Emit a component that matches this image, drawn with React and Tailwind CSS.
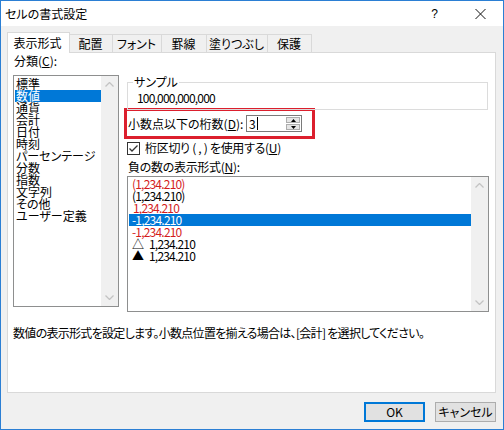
import React from "react";

const JP = "font-['Noto_Sans_CJK_JP',sans-serif]";
const NUM = "font-['Liberation_Sans_Narrow','Noto_Sans_CJK_JP',sans-serif] tracking-[-0.8px]";

function Chevron({ down }) {
  return (
    <svg width="9" height="5" viewBox="0 0 9 5">
      <path
        d={down ? "M0.5 0.5 L4.5 4.5 L8.5 0.5" : "M0.5 4.5 L4.5 0.5 L8.5 4.5"}
        fill="none"
        stroke="#c3c3c3"
        strokeWidth="1.3"
      />
    </svg>
  );
}

function ScrollBar() {
  return (
    <div className="w-[17px] shrink-0 bg-[#f0f0f0] flex flex-col justify-between">
      <div className="h-[17px] flex items-center justify-center">
        <Chevron />
      </div>
      <div className="h-[17px] flex items-center justify-center">
        <Chevron down />
      </div>
    </div>
  );
}

function U({ children }) {
  return <span className="underline underline-offset-[1px]">{children}</span>;
}

const categories = [
  "標準",
  "数値",
  "通貨",
  "会計",
  "日付",
  "時刻",
  "パーセンテージ",
  "分数",
  "指数",
  "文字列",
  "その他",
  "ユーザー定義",
];

const negatives = [
  { t: "(1,234.210)", c: "text-[#d41c1c]" },
  { t: "(1,234.210)", c: "text-black" },
  { t: "1,234.210", c: "text-[#d41c1c] pl-[4px]" },
  { t: "-1,234.210", c: "text-white bg-[#0078d7]" },
  { t: "-1,234.210", c: "text-[#d41c1c]" },
  { t: "1,234.210", c: "text-black", tri: "△" },
  { t: "1,234.210", c: "text-black", tri: "▲" },
];

export default function App() {
  return (
    <div
      className={`w-[504px] h-[430px] border border-[#2b7fd4] bg-[#f0f0f0] flex flex-col text-black ${JP} text-[12px] leading-[12px] overflow-hidden [font-feature-settings:'palt']`}
    >
      {/* title bar */}
      <div className="h-[25px] bg-white flex items-center pl-[4px] shrink-0">
        <span className="text-[12px]">セルの書式設定</span>
        <span className="ml-auto mr-[37px] text-[12px] font-['Liberation_Sans',sans-serif]">?</span>
        <svg width="11" height="10" viewBox="0 0 11 10" className="mr-[17px]">
          <path d="M0.5 0 L10.5 10 M10.5 0 L0.5 10" stroke="#111" strokeWidth="1" />
        </svg>
      </div>

      {/* body */}
      <div className="flex-1 flex flex-col pl-[6px] pr-[7px] pt-[6px]">
        {/* tabs */}
        <div className="h-[20px] flex items-end shrink-0">
          <div className="relative z-10 -mb-px h-[21px] w-[63px] bg-white border border-b-0 border-[#d9d9d9] flex items-center justify-center pr-[2px]">
            表示形式
          </div>
          {[
            ["配置", "w-[43px]"],
            ["フォント", "w-[49px]"],
            ["罫線", "w-[45px]"],
            ["塗りつぶし", "w-[61px]"],
            ["保護", "w-[44px]"],
          ].map(([t, w]) => (
            <div
              key={t}
              className={`${w} h-[18px] border-t border-r border-[#d9d9d9] flex items-center justify-center pr-[1px]`}
            >
              {t}
            </div>
          ))}
        </div>

        {/* panel */}
        <div className="h-[341px] shrink-0 bg-white border border-[#d9d9d9] flex flex-col pl-[5px]">
          <div className="flex items-start">
            {/* left column */}
            <div className="flex flex-col w-[106px]">
              <div className="ml-px pt-[1px] leading-[14px]">
                分類(<U>C</U>):
              </div>
              <div className="mt-[7px] h-[232px] border border-[#8e8f8f] flex">
                <div className="flex-1 flex flex-col pt-[2px]">
                  {categories.map((c, i) => (
                    <div
                      key={c}
                      className={`ml-px h-[12px] pl-[1px] leading-[12px] whitespace-nowrap ${
                        i === 1 ? "bg-[#0078d7] text-white" : ""
                      }`}
                    >
                      {c}
                    </div>
                  ))}
                </div>
                <ScrollBar />
              </div>
            </div>

            {/* right column */}
            <div className="ml-[5px] w-[365px] flex flex-col pt-[29px]">
              {/* sample */}
              <div className="relative ml-[3px] w-[361px] h-[28px] border border-[#dcdcdc] flex items-center pl-[9px] pt-[4px]">
                <span className="absolute -top-[7px] left-[5px] bg-white px-[1px] leading-[12px]">
                  サンプル
                </span>
                <span className={NUM}>100,000,000,000</span>
              </div>

              {/* red highlight */}
              <div className="-mt-[2px] w-[191px] h-[31px] border-[3px] border-[#dc1f2d] flex items-center">
                <div className="w-[119px] pl-[1px] whitespace-nowrap">
                  小数点以下の桁数(<U>D</U>):
                </div>
                <div className="w-[56px] h-[17px] border border-[#7a7a7a] bg-white flex">
                  <div className="flex-1 flex items-center pl-[2px]">
                    <span className={NUM}>3</span>
                    <span className="ml-[2px] w-px h-[13px] bg-black" />
                  </div>
                  <div className="w-[15px] flex flex-col pr-px py-px gap-px">
                    <div className="flex-1 bg-[#e5e5e5] border border-[#adadad] flex items-center justify-center">
                      <svg width="5" height="3" viewBox="0 0 5 3">
                        <path d="M2.5 0 L5 3 L0 3 Z" fill="#000" />
                      </svg>
                    </div>
                    <div className="flex-1 bg-[#e5e5e5] border border-[#adadad] flex items-center justify-center">
                      <svg width="5" height="3" viewBox="0 0 5 3">
                        <path d="M0 0 L5 0 L2.5 3 Z" fill="#000" />
                      </svg>
                    </div>
                  </div>
                </div>
              </div>

              {/* checkbox */}
              <div className="mt-[2px] ml-[3px] h-[14px] flex items-center">
                <div className="w-[13px] h-[13px] border border-[#333] bg-white flex items-center justify-center">
                  <svg width="11" height="11" viewBox="0 0 11 11">
                    <path d="M1.5 5.5 L4 8 L9.5 2.5" fill="none" stroke="#333" strokeWidth="1.3" />
                  </svg>
                </div>
                <span className="ml-[5px] whitespace-nowrap tracking-[-0.3px]">
                  桁区切り ( , ) を使用する(<U>U</U>)
                </span>
              </div>

              {/* negatives label */}
              <div className="mt-[6px] ml-[4px] leading-[12px] tracking-[-0.3px]">
                負の数の表示形式(<U>N</U>):
              </div>

              {/* negatives list */}
              <div className="mt-[3px] ml-[3px] w-[362px] h-[136px] border border-[#8e8f8f] flex">
                <div className="flex-1 flex flex-col pt-[1px]">
                  {negatives.map((n, i) => (
                    <div
                      key={i}
                      className={`ml-px h-[12px] pl-[3px] leading-[12px] whitespace-nowrap flex items-center ${n.c}`}
                    >
                      {n.tri && <span className="w-[17px] text-[12px]">{n.tri}</span>}
                      <span className={NUM}>{n.t}</span>
                    </div>
                  ))}
                </div>
                <ScrollBar />
              </div>
            </div>
          </div>

          {/* description */}
          <div className="mt-[14px] leading-[14px] whitespace-nowrap tracking-[-0.7px]">
            数値の表示形式を設定します。小数点位置を揃える場合は、[会計] を選択してください。
          </div>
        </div>

        {/* buttons */}
        <div className="mt-[9px] flex justify-end gap-[10px]">
          <div className="w-[61px] h-[20px] bg-[#e1e1e1] border-2 border-[#0078d7] flex items-center justify-center">
            OK
          </div>
          <div className="w-[61px] h-[20px] bg-[#e1e1e1] border border-[#adadad] flex items-center justify-center">
            キャンセル
          </div>
        </div>
      </div>
    </div>
  );
}
